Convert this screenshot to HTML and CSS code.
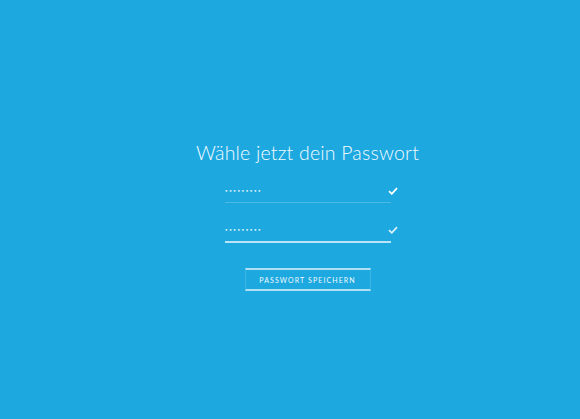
FILE: index.html
```html
<!DOCTYPE html>
<html lang="de">
<head>
<meta charset="utf-8">
<link rel="stylesheet" href="styles.css">
</head>
<body>
<main class="page">
  <form class="card">
    <h1 class="title">Wähle jetzt dein Passwort</h1>
    <div class="field">
      <span class="dots">•••••••••</span>
      <svg class="check" viewBox="0 0 10 8" width="10" height="8"><path d="M1 4.2 L3.8 6.8 L9 1.2" fill="none" stroke="#fff" stroke-width="1.8"/></svg>
    </div>
    <div class="field active">
      <span class="dots">•••••••••</span>
      <svg class="check" viewBox="0 0 10 8" width="10" height="8"><path d="M1 4.2 L3.8 6.8 L9 1.2" fill="none" stroke="#d6effa" stroke-width="1.8"/></svg>
    </div>
    <button type="button" class="save">PASSWORT SPEICHERN</button>
  </form>
</main>
</body>
</html>
```
FILE: styles.css
```css
html, body {
  margin: 0;
  padding: 0;
  height: 100%;
}
body {
  background: #1da8e0;
  font-family: "Lato", "Open Sans", sans-serif;
  color: #fff;
}
.page {
  height: 419px;
  display: flex;
  align-items: flex-start;
  justify-content: center;
  padding-left: 35px;
  box-sizing: border-box;
}
.card {
  margin-top: 141px;
  width: 166px;
  display: flex;
  flex-direction: column;
  align-items: center;
}
.title {
  margin: 0;
  font-weight: 300;
  font-size: 19.5px;
  line-height: 24px;
  white-space: nowrap;
  color: #f2fbff;
  letter-spacing: 0.2px;
}
.field {
  align-self: stretch;
  display: flex;
  align-items: center;
  justify-content: space-between;
  height: 24px;
  border-bottom: 1px solid rgba(255,255,255,0.22);
  box-sizing: border-box;
}
.field:first-of-type { margin-top: 14px; }
.field + .field { margin-top: 16px; }
.field.active {
  border-bottom: 2px solid rgba(255,255,255,0.7);
}
.dots {
  font-family: "DejaVu Sans", sans-serif;
  font-size: 6px;
  letter-spacing: 0.6px;
  color: #e6f6fd;
  line-height: 8px;
}
.check {
  display: block;
  margin-right: -7px;
}
.save {
  margin-top: 25px;
  width: 126px;
  height: 23px;
  background: transparent;
  border: 1px solid rgba(255,255,255,0.15);
  border-top: 2px solid rgba(255,255,255,0.65);
  border-bottom: 2px solid rgba(255,255,255,0.65);
  color: #f0faff;
  font-family: "Lato", sans-serif;
  font-weight: 400;
  font-size: 7px;
  letter-spacing: 1.1px;
  padding: 0;
  cursor: pointer;
}
```
